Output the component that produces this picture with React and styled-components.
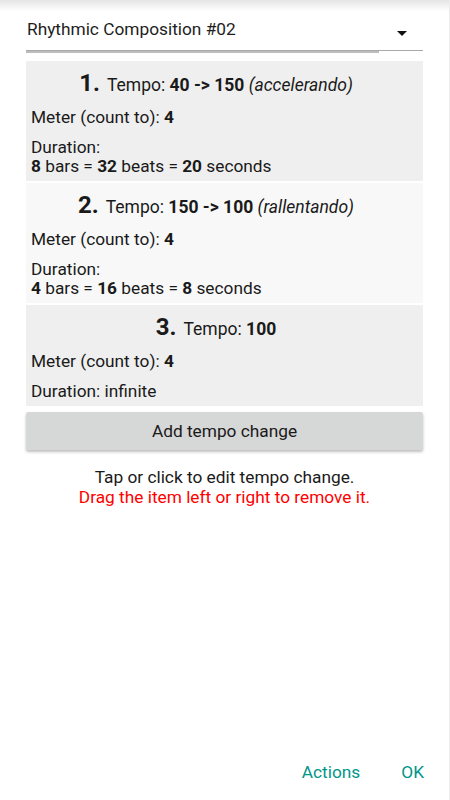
import React from "react";
import styled, {createGlobalStyle} from "styled-components";

const GlobalStyle = createGlobalStyle`
  html, body {
    margin: 0;
    padding: 0;
    background: #ffffff;
  }
  body {
    font-family: Roboto, "Liberation Sans", sans-serif;
    color: #1a1a1a;
  }
`;

export const Screen = styled.div`
  position: relative;
  width: 450px;
  height: 800px;
  box-sizing: border-box;
  border-right: 1px solid #ececec;
  background: linear-gradient(#e4e4e4 0px, #ffffff 11px);
  display: flex;
  flex-direction: column;
  overflow: hidden;
`;

export const Content = styled.div`
  flex: 1;
  padding: 0 26px;
  display: flex;
  flex-direction: column;
`;

export const Spinner = styled.div`
  position: relative;
  height: 51px;
  box-sizing: border-box;
  border-bottom: 1px solid #a9a9a9;
  display: flex;
  align-items: center;
  justify-content: space-between;
  padding: 8px 16px 0 1px;

  &::after {
    content: "";
    position: absolute;
    left: 0;
    bottom: -3px;
    width: 353px;
    height: 2px;
    background: #bdbdbd;
  }
`;

export const SpinnerText = styled.span`
  font-size: 17.3px;
  color: #1e1e1e;
`;

export const Arrow = styled.span`
  width: 0;
  height: 0;
  margin-top: 9px;
  border-left: 5px solid transparent;
  border-right: 5px solid transparent;
  border-top: 5px solid #111;
`;

export const List = styled.div`
  margin-top: 10px;
  display: flex;
  flex-direction: column;
  gap: 2px;
`;

export const Card = styled.div`
  background: ${props => props.light ? "#f8f8f8" : "#efefef"};
  padding: 8px 22px 5px 5px;
  display: flex;
  flex-direction: column;
`;

export const Heading = styled.div`
  text-align: center;
  font-size: 17.5px;
  line-height: 28px;
  margin-bottom: 9px;
`;

export const Number = styled.span`
  font-size: 24px;
  font-weight: 700;
  margin-right: 3px;
`;

export const Line = styled.div`
  font-size: 17.3px;
  line-height: 19px;
  & + & {
    margin-top: 11px;
  }
`;

export const AddButton = styled.button`
  margin-top: 6px;
  height: 38px;
  border: none;
  border-radius: 2px;
  background: #d6d7d7;
  box-shadow: 0 2px 3px rgba(0, 0, 0, 0.25);
  font-family: Roboto, "Liberation Sans", sans-serif;
  font-size: 17.3px;
  color: #1a1a1a;
`;

export const Hints = styled.div`
  margin-top: 17px;
  display: flex;
  flex-direction: column;
`;

export const Hint = styled.div`
  text-align: center;
  font-size: 17.3px;
  line-height: 20px;
  color: ${props => props.warn ? "#ff0000" : "#1a1a1a"};
`;

export const Footer = styled.div`
  display: flex;
  justify-content: flex-end;
  gap: 41px;
  padding: 0 25px 18px 0;
`;

export const FooterButton = styled.span`
  font-size: 17.3px;
  color: #009688;
`;

const changes = [
    {
        tempo: <><b>40 -&gt; 150</b> <i>(accelerando)</i></>,
        meter: 4,
        duration: <>Duration:<br/><b>8</b> bars = <b>32</b> beats = <b>20</b> seconds</>
    },
    {
        tempo: <><b>150 -&gt; 100</b> <i>(rallentando)</i></>,
        meter: 4,
        duration: <>Duration:<br/><b>4</b> bars = <b>16</b> beats = <b>8</b> seconds</>
    },
    {
        tempo: <b>100</b>,
        meter: 4,
        duration: <>Duration: infinite</>
    }
];

const App = () => {
    return (
        <>
            <GlobalStyle/>
            <Screen>
                <Content>
                    <Spinner>
                        <SpinnerText>Rhythmic Composition #02</SpinnerText>
                        <Arrow/>
                    </Spinner>
                    <List>
                        {changes.map((c, i) => (
                            <Card key={i} light={i === 1}>
                                <Heading>
                                    <Number>{i + 1}.</Number> Tempo: {c.tempo}
                                </Heading>
                                <Line>Meter (count to): <b>{c.meter}</b></Line>
                                <Line>{c.duration}</Line>
                            </Card>
                        ))}
                    </List>
                    <AddButton>Add tempo change</AddButton>
                    <Hints>
                        <Hint>Tap or click to edit tempo change.</Hint>
                        <Hint warn>Drag the item left or right to remove it.</Hint>
                    </Hints>
                </Content>
                <Footer>
                    <FooterButton>Actions</FooterButton>
                    <FooterButton>OK</FooterButton>
                </Footer>
            </Screen>
        </>
    )
};

export default App;
